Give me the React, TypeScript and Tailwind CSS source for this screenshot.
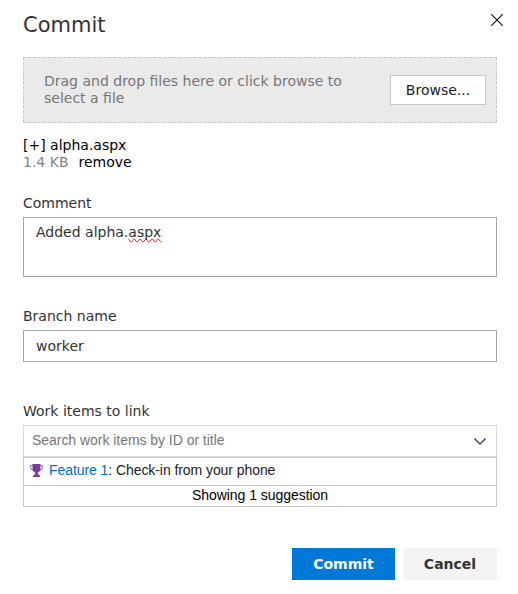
import React from "react";

function CloseIcon() {
  return (
    <svg width="12" height="12" viewBox="0 0 12 12" fill="none" stroke="#111" strokeWidth="1.2">
      <path d="M0.3 0.3 11.7 11.7M11.7 0.3 0.3 11.7" />
    </svg>
  );
}

function ChevronIcon() {
  return (
    <svg width="12" height="7" viewBox="0 0 12 7" fill="none" stroke="#2b4766" strokeWidth="1.4">
      <path d="M0.5 0.5 6 5.9 11.5 0.5" />
    </svg>
  );
}

function TrophyIcon() {
  return (
    <svg width="13" height="13" viewBox="0 0 13 13" fill="none">
      <path d="M3 1.500H.6V3.500c0 1.600 1.200 2.500 3 2.900M10 1.500h2.400V3.500c0 1.600-1.200 2.500-3 2.900" stroke="#a77fb9" strokeWidth="1.100" />
      <path d="M2.500 0h8v4.500c0 2-1 3.400-2.700 4V10.200c1.200.3 2.200 1 2.400 2.800H2.800c.2-1.800 1.200-2.500 2.400-2.800V8.500c-1.700-.6-2.700-2-2.700-4V0Z" fill="#773b93" />
    </svg>
  );
}

export default function App() {
  return (
    <main className="h-[594px] w-[518px] overflow-hidden bg-white pl-[23px] pr-[21px] font-['DejaVu_Sans',sans-serif] text-sm leading-[17px] text-[#333]">
      <header className="flex h-[57px] items-start justify-between">
        <h1 className="pt-[11px] text-[21px] leading-7">Commit</h1>
        <button aria-label="Close" className="-mr-3 mt-[8px] flex size-6 items-center justify-center">
          <CloseIcon />
        </button>
      </header>

      <section className="flex h-[66px] items-center justify-between border border-dashed border-[#c8c8c8] bg-[#eaeaea] pl-5 pr-[10px]">
        <p className="w-[310px] text-[#767676]">Drag and drop files here or click browse to select a file</p>
        <button className="h-[30px] w-24 border border-[#c8c8c8] bg-white text-[#222]">Browse...</button>
      </section>

      <section className="mt-[14px] text-black">
        <p>[+] alpha.aspx</p>
        <p>
          <span className="mr-[10px] text-[#858585]">1.4 KB</span>remove
        </p>
      </section>

      <section className="mt-6">
        <h2>Comment</h2>
        <div className="mt-[5px] h-[60px] border border-[#a6a6a6] px-3 pt-[6px]">
          Added alpha.<span className="[text-decoration-line:spelling-error]">aspx</span>
        </div>
      </section>

      <section className="mt-[31px]">
        <h2>Branch name</h2>
        <div className="mt-[5px] flex h-8 items-center border border-[#a6a6a6] px-3">worker</div>
      </section>

      <section className="mt-[41px]">
        <h2>Work items to link</h2>
        <div className="mt-[5px] font-['Liberation_Sans',sans-serif] tracking-[-0.04px]">
          <div className="flex h-8 items-center justify-between border border-[#dadada] pl-2 pr-[10px] text-[#767676]">
            <span className="-mt-[2px]">Search work items by ID or title</span>
            <ChevronIcon />
          </div>
          <div className="border border-[#c8c8c8]">
            <div className="flex h-7 items-center border-b border-[#c8c8c8] pb-[2px] pl-[6px] text-[#222]">
              <TrophyIcon />
              <span className="-mt-px ml-[6px] tracking-[-0.07px]">
                <span className="text-[#0072c9]">Feature 1</span>: Check-in from your phone
              </span>
            </div>
            <div className="h-5 pt-px text-center text-black">Showing 1 suggestion</div>
          </div>
        </div>
      </section>

      <footer className="mt-[41px] flex justify-end gap-2 font-bold">
        <button className="h-8 w-[103px] bg-[#0078d7] text-white">Commit</button>
        <button className="h-8 w-[94px] bg-[#f4f4f4]">Cancel</button>
      </footer>
    </main>
  );
}
